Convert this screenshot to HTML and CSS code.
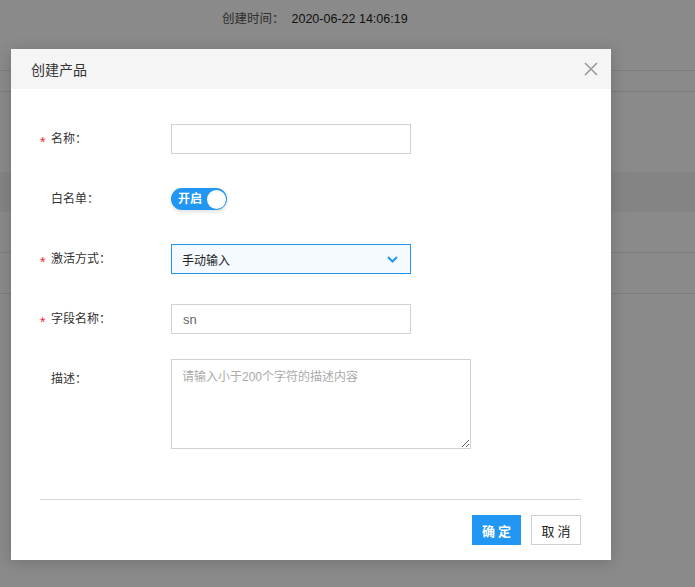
FILE: index.html
```html
<!DOCTYPE html>
<html lang="zh-CN">
<head>
<meta charset="utf-8">
<title>创建产品</title>
<link rel="stylesheet" href="styles.css">
</head>
<body>
<div class="page">
  <div class="info"><span class="info-k">创建时间：</span><span class="info-v">2020-06-22 14:06:19</span></div>
  <div class="row-thin"></div>
  <div class="row-blank"></div>
  <div class="row-band"></div>
  <div class="row-line"></div>
  <div class="row-line"></div>
</div>
<div class="mask"></div>
<div class="modal">
  <div class="modal-head">
    <span class="modal-title">创建产品</span>
    <svg class="close" width="14" height="14" viewBox="0 0 14 14"><path d="M1 1L13 13M13 1L1 13" stroke="#9a9a9a" stroke-width="1.6" fill="none"/></svg>
  </div>
  <div class="modal-body">
    <div class="form-row">
      <label class="label"><span class="req">*</span>名称：</label>
      <input class="input" type="text">
    </div>
    <div class="form-row">
      <label class="label"><span class="req"></span>白名单：</label>
      <span class="switch"><span class="switch-text">开启</span><span class="knob"></span></span>
    </div>
    <div class="form-row">
      <label class="label"><span class="req">*</span>激活方式：</label>
      <div class="select"><span>手动输入</span>
        <svg width="11" height="7" viewBox="0 0 11 7"><path d="M1 1L5.5 5.5L10 1" stroke="#2196f3" stroke-width="2" fill="none"/></svg>
      </div>
    </div>
    <div class="form-row row-before-area">
      <label class="label"><span class="req">*</span>字段名称：</label>
      <input class="input input-val" type="text" value="sn">
    </div>
    <div class="form-row form-row-area">
      <label class="label label-area"><span class="req"></span>描述：</label>
      <textarea class="area" placeholder="请输入小于200个字符的描述内容"></textarea>
    </div>
    <div class="modal-foot">
      <button class="btn btn-primary">确定</button>
      <button class="btn btn-default">取消</button>
    </div>
  </div>
</div>
</body>
</html>
```

FILE: styles.css
```css
* { box-sizing: border-box; }
html, body { margin: 0; padding: 0; }
body {
  width: 695px;
  height: 587px;
  overflow: hidden;
  background: #fff;
  font-family: "Liberation Sans", "Noto Sans CJK SC", sans-serif;
  font-size: 12px;
  color: #333;
  position: relative;
}
.page { width: 695px; }
.info {
  height: 71px;
  padding: 10px 0 0 222px;
  line-height: 18px;
  font-size: 12.5px;
  border-bottom: 1px solid #e8e8e8;
}
.info-k { color: #555; margin-right: 7px; }
.info-v { color: #222; }
.row-thin { height: 21px; border-bottom: 1px solid #e8e8e8; }
.row-blank { height: 80px; }
.row-band { height: 40px; background: #f4f4f4; }
.row-line { height: 41px; border-bottom: 1px solid #e8e8e8; }

.mask {
  position: absolute;
  inset: 0;
  background: rgba(0, 0, 0, 0.46);
}
.modal {
  position: absolute;
  left: 11px;
  top: 49px;
  width: 600px;
  background: #fff;
  box-shadow: 0 2px 14px rgba(0, 0, 0, 0.18);
}
.modal-head {
  height: 40px;
  background: #f5f5f5;
  display: flex;
  align-items: center;
  justify-content: space-between;
  padding: 0 13px 0 20px;
}
.modal-title { font-size: 14px; color: #333; }
.close { display: block; }
.modal-body { padding: 35px 30px 0 29px; }
.form-row {
  display: flex;
  align-items: center;
  height: 30px;
  margin-bottom: 30px;
}
.row-before-area { margin-bottom: 25px; }
.form-row-area { height: 90px; align-items: flex-start; margin-bottom: 0; }
.label {
  width: 131px;
  flex: none;
  color: #333;
  line-height: 30px;
  display: flex;
  align-items: center;
}
.label-area { line-height: 20px; padding-top: 10px; }
.req {
  display: inline-block;
  width: 11px;
  height: 10px;
  line-height: 1;
  padding-top: 1px;
  color: #f5222d;
  font-size: 14px;
}
.input {
  width: 240px;
  height: 30px;
  border: 1px solid #d2d2d2;
  padding: 0 11px;
  font-family: inherit;
  font-size: 13px;
  color: #666;
  outline: none;
  background: #fff;
}
.switch {
  width: 56px;
  height: 22px;
  border-radius: 11px;
  background: #2196f3;
  display: flex;
  align-items: center;
  justify-content: space-between;
  padding: 0 1px 0 7px;
  box-shadow: 0 2px 4px rgba(0, 0, 0, 0.12);
}
.switch-text { color: #fff; font-weight: bold; font-size: 12px; line-height: 22px; }
.knob {
  width: 19px;
  height: 19px;
  border-radius: 50%;
  background: #fff;
}
.select {
  width: 240px;
  height: 30px;
  border: 1px solid #2196f3;
  background: #f5faff;
  display: flex;
  align-items: center;
  justify-content: space-between;
  padding: 0 12px 0 10px;
  color: #222;
  font-size: 12px;
}
.select svg { display: block; }
.area {
  width: 300px;
  height: 90px;
  border: 1px solid #d2d2d2;
  padding: 8px 10px;
  font-family: inherit;
  font-size: 12px;
  line-height: 18px;
  outline: none;
  resize: both;
  margin: 0;
}
.area::placeholder { color: #aaa; }
.modal-foot {
  margin-top: 50px;
  border-top: 1px solid #d6d6d6;
  padding: 15px 0;
  display: flex;
  justify-content: flex-end;
  gap: 10px;
}
.btn {
  height: 30px;
  font-family: inherit;
  font-size: 13px;
  letter-spacing: 3px;
  text-indent: 3px;
  padding: 0;
  cursor: pointer;
}
.btn-primary {
  width: 49px;
  background: #2196f3;
  color: #fff;
  border: none;
  font-weight: bold;
}
.btn-default {
  width: 50px;
  background: #fff;
  color: #222;
  border: 1px solid #cfcfcf;
}
```
